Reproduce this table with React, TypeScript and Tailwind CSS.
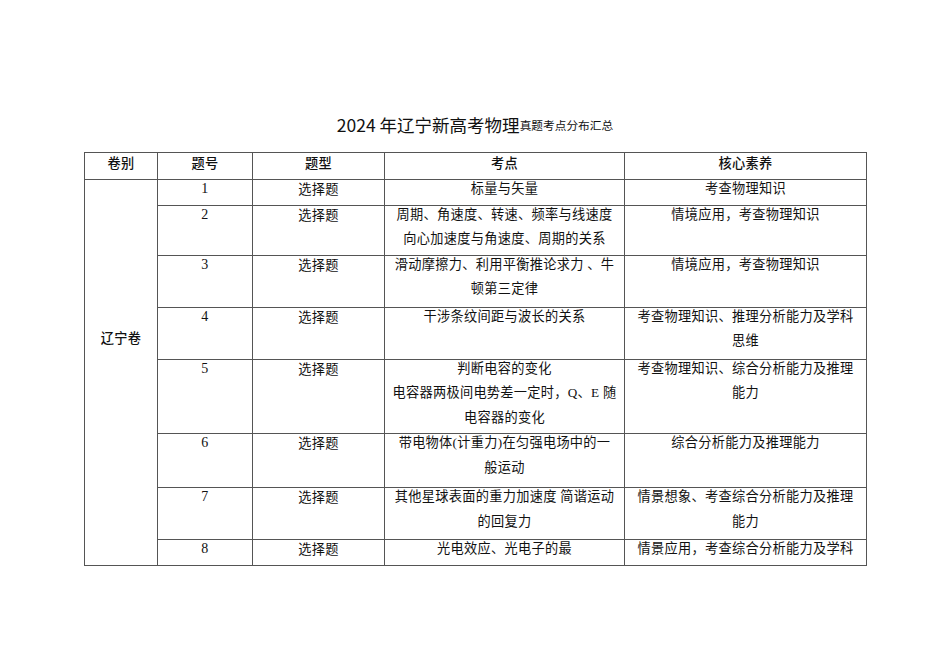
const sans = "font-['Noto_Sans_CJK_SC',sans-serif]";
const serif = "font-['Liberation_Serif','Noto_Sans_CJK_SC',serif]";

type Row = { no: string; h: string; points: string[]; core: string[] };

const rows: Row[] = [
  { no: "1", h: "h-[26px]", points: ["标量与矢量"], core: ["考查物理知识"] },
  {
    no: "2",
    h: "h-[50px]",
    points: ["周期、角速度、转速、频率与线速度", "向心加速度与角速度、周期的关系"],
    core: ["情境应用，考查物理知识"],
  },
  {
    no: "3",
    h: "h-[52px]",
    points: ["滑动摩擦力、利用平衡推论求力 、牛", "顿第三定律"],
    core: ["情境应用，考查物理知识"],
  },
  {
    no: "4",
    h: "h-[52px]",
    points: ["干涉条纹间距与波长的关系"],
    core: ["考查物理知识、推理分析能力及学科", "思维"],
  },
  {
    no: "5",
    h: "h-[74px]",
    points: ["判断电容的变化", "电容器两极间电势差一定时，Q、E 随", "电容器的变化"],
    core: ["考查物理知识、综合分析能力及推理", "能力"],
  },
  {
    no: "6",
    h: "h-[54px]",
    points: ["带电物体(计重力)在匀强电场中的一", "般运动"],
    core: ["综合分析能力及推理能力"],
  },
  {
    no: "7",
    h: "h-[52px]",
    points: ["其他星球表面的重力加速度 简谐运动", "的回复力"],
    core: ["情景想象、考查综合分析能力及推理", "能力"],
  },
  {
    no: "8",
    h: "h-[26px]",
    points: ["光电效应、光电子的最"],
    core: ["情景应用，考查综合分析能力及学科"],
  },
];

function Lines({ lines }: { lines: string[] }) {
  return (
    <>
      {lines.map((l, i) => (
        <div key={i} className="h-[24.5px] leading-[18px] whitespace-nowrap">
          {l}
        </div>
      ))}
    </>
  );
}

const cell = "border border-[#555] align-top text-center p-0";

export default function App() {
  return (
    <div className="w-[950px] h-[672px] bg-white text-[#111] pt-[113px]">
      <div className="h-6 flex items-end justify-center leading-6">
        <span className={`${sans} text-[17.5px]`}>2024 年辽宁新高考物理</span>
        <span className={`${serif} text-[11.7px] leading-[20px]`}>真题考点分布汇总</span>
      </div>

      <table className="mt-[15px] ml-[84px] w-[782px] table-fixed border-collapse text-[13.2px] tracking-[0.3px]">
        <colgroup>
          <col className="w-[73px]" />
          <col className="w-[95px]" />
          <col className="w-[132px]" />
          <col className="w-[240px]" />
          <col className="w-[242px]" />
        </colgroup>
        <thead>
          <tr className={sans}>
            <th className={`${cell} h-[26px] pt-[1px] font-medium`}><Lines lines={["卷别"]} /></th>
            <th className={`${cell} pt-[1px] font-medium`}><Lines lines={["题号"]} /></th>
            <th className={`${cell} pt-[1px] font-medium`}><Lines lines={["题型"]} /></th>
            <th className={`${cell} pt-[1px] font-medium`}><Lines lines={["考点"]} /></th>
            <th className={`${cell} pt-[1px] font-medium`}><Lines lines={["核心素养"]} /></th>
          </tr>
        </thead>
        <tbody>
          {rows.map((r, i) => (
            <tr key={r.no}>
              {i === 0 && (
                <td rowSpan={8} className={`${cell} ${sans} font-medium pt-[148px]`}>
                  辽宁卷
                </td>
              )}
              <td className={`${cell} ${r.h} ${serif} text-[14px]`}><Lines lines={[r.no]} /></td>
              <td className={`${cell} ${sans}`}><Lines lines={["选择题"]} /></td>
              <td className={`${cell} ${serif}`}><Lines lines={r.points} /></td>
              <td className={`${cell} ${serif}`}><Lines lines={r.core} /></td>
            </tr>
          ))}
        </tbody>
      </table>
    </div>
  );
}
